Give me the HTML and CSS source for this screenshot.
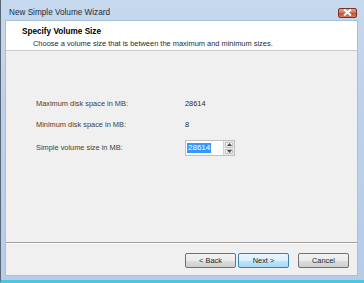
FILE: index.html
```html
<!DOCTYPE html>
<html>
<head>
    <title>New Simple Volume Wizard</title>
    <link rel="stylesheet" href="styles.css">
</head>
<body>
    <div class="window">
        <div class="title-bar">
            <span class="title-text">New Simple Volume Wizard</span>
            <span class="close-button">
                <svg width="9" height="7" viewBox="0 0 9 7">
                    <path d="M1 0.5 L8 6.5 M8 0.5 L1 6.5" stroke="#fff" stroke-width="2"/>
                </svg>
            </span>
        </div>
        <div class="frame">
            <div class="wizard-header">
                <div class="header-title">Specify Volume Size</div>
                <div class="header-subtitle">Choose a volume size that is between the maximum and minimum sizes.</div>
            </div>
            <div class="wizard-body">
                <div class="fields">
                    <span class="field-label">Maximum disk space in MB:</span>
                    <span class="field-value">28614</span>
                    <span class="field-label">Minimum disk space in MB:</span>
                    <span class="field-value">8</span>
                    <span class="field-label">Simple volume size in MB:</span>
                    <div class="spin-box">
                        <div class="spin-input"><span class="selected-text">28614</span></div>
                        <div class="spin-buttons">
                            <span class="spin-button">
                                <svg width="5" height="3" viewBox="0 0 5 3"><path d="M0 3 L2.5 0 L5 3 Z" fill="#4d4d4d"/></svg>
                            </span>
                            <span class="spin-button">
                                <svg width="5" height="3" viewBox="0 0 5 3"><path d="M0 0 L2.5 3 L5 0 Z" fill="#4d4d4d"/></svg>
                            </span>
                        </div>
                    </div>
                </div>
            </div>
            <div class="wizard-footer">
                <button class="wizard-button">&lt; Back</button>
                <button class="wizard-button default-button">Next &gt;</button>
                <button class="wizard-button cancel-button">Cancel</button>
            </div>
        </div>
    </div>
</body>
</html>
```

FILE: styles.css
```css
body {
    margin: 0;
    font-family: "Liberation Sans", Arial, sans-serif;
    background-color: #b9d1ea;
}

.window {
    width: 364px;
    height: 283px;
    box-sizing: border-box;
    border-left: 1px solid #5a6577;
    border-bottom: 3px solid #4fc4e4;
    background: linear-gradient(to bottom, #c6d9ee 0%, #bcd2ea 40%, #b6cde8 100%);
    display: flex;
    flex-direction: column;
    overflow: hidden;
}

.title-bar {
    height: 21px;
    display: flex;
    align-items: center;
    justify-content: space-between;
    padding: 0 8px 0 8px;
    flex-shrink: 0;
}

.title-text {
    font-size: 8.2px;
    color: #1e2b3c;
    margin-top: 4px;
}

.close-button {
    width: 19px;
    height: 10px;
    margin-top: 4px;
    margin-right: -1px;
    border: 1px solid #7a3126;
    border-radius: 2px;
    background: linear-gradient(to bottom, #e3a08e 0%, #cf7763 45%, #bf4f3a 55%, #d4805f 100%);
    display: flex;
    align-items: center;
    justify-content: center;
    box-sizing: border-box;
}

.frame {
    flex: 1;
    margin: 0 7px 5px 5px;
    background-color: #f0f0f0;
    display: flex;
    flex-direction: column;
    box-shadow: 0 0 0 1px #a7c0dc;
}

.wizard-header {
    height: 30px;
    background-color: #fff;
    border-bottom: 1px solid #c9c9c9;
    padding: 6px 0 0 16px;
    box-sizing: border-box;
}

.header-title {
    font-size: 8.2px;
    font-weight: bold;
    color: #000;
    line-height: 10px;
}

.header-subtitle {
    font-size: 7.45px;
    color: #2a2a2a;
    line-height: 10px;
    margin-top: 2px;
    padding-left: 11px;
}

.wizard-body {
    flex: 1;
    padding: 47px 0 0 30px;
    border-bottom: 1px solid #a0a0a0;
    box-shadow: 0 1px 0 #fff;
}

.fields {
    display: grid;
    grid-template-columns: 149px auto;
    row-gap: 9px;
    align-items: center;
}

.field-label,
.field-value {
    font-size: 7.4px;
    line-height: 12px;
    color: #404040;
}

.field-value {
    color: #2a2a2a;
}

.spin-box {
    display: flex;
    height: 16px;
    width: 50px;
    border: 1px solid #c0c0c0;
    box-sizing: border-box;
    background-color: #fff;
}

.spin-input {
    width: 36px;
    display: flex;
    align-items: center;
    padding-left: 1px;
    border-right: 1px solid #d0d0d0;
}

.selected-text {
    background-color: #3399ff;
    color: #fff;
    font-size: 8px;
    line-height: 10px;
    padding: 0 1px;
}

.spin-buttons {
    flex: 1;
    display: flex;
    flex-direction: column;
    justify-content: center;
    gap: 1px;
    padding: 1px;
    background-color: #e8e8e8;
}

.spin-button {
    height: 6px;
    border: 1px solid #c4c4c4;
    border-radius: 1px;
    background: linear-gradient(to bottom, #f8f8f8, #e0e0e0);
    display: flex;
    align-items: center;
    justify-content: center;
}

.wizard-footer {
    height: 32px;
    display: flex;
    justify-content: flex-end;
    align-items: flex-start;
    padding: 10px 8px 0 0;
    box-sizing: border-box;
}

.wizard-button {
    width: 51px;
    height: 15px;
    padding: 0;
    font-family: "Liberation Sans", Arial, sans-serif;
    font-size: 7.4px;
    color: #222;
    border: 1px solid #707070;
    border-radius: 2px;
    background: linear-gradient(to bottom, #f2f2f2 0%, #ebebeb 50%, #dddddd 51%, #cfcfcf 100%);
    margin-left: 2px;
}

.default-button {
    border-color: #3c7fb1;
    background: linear-gradient(to bottom, #eaf6fd 0%, #d9f0fc 50%, #bee6fd 51%, #a7d9f5 100%);
}

.cancel-button {
    margin-left: 9px;
}
```
